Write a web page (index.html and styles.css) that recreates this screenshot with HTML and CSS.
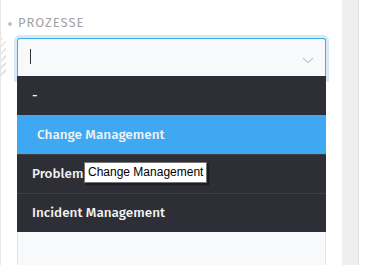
FILE: index.html
```html
<!DOCTYPE html>
<html lang="de">
<head>
    <meta charset="UTF-8">
    <meta name="viewport" content="width=device-width, initial-scale=1.0">
    <title>Prozesse</title>
    <link rel="stylesheet" href="styles.css">
</head>
<body>
    <div class="page">
        <div class="panel">
            <div class="hatch"></div>
            <div class="field">
                <div class="field-label">
                    <span class="dot"></span>
                    <span>Prozesse</span>
                </div>
                <div class="select-wrap">
                    <div class="select-input">
                        <span class="caret"></span>
                        <svg class="chevron" width="12" height="7" viewBox="0 0 12 7">
                            <path d="M1 1 L6 5.5 L11 1" fill="none" stroke="#cfcfcf" stroke-width="1.6"/>
                        </svg>
                    </div>
                    <ul class="options">
                        <li class="option">-</li>
                        <li class="option selected">Change Management</li>
                        <li class="option">Problem Management</li>
                        <li class="option">Incident Management</li>
                    </ul>
                    <div class="tooltip">Change Management</div>
                </div>
                <div class="rest"></div>
            </div>
        </div>
        <div class="sidebar"></div>
    </div>
</body>
</html>
```

FILE: styles.css
```css
* {
    margin: 0;
    padding: 0;
    box-sizing: border-box;
}

body {
    font-family: 'Fira Sans', 'Open Sans', sans-serif;
    background-color: #fff;
    width: 371px;
    height: 265px;
    overflow: hidden;
}

.page {
    display: flex;
    height: 265px;
}

.panel {
    position: relative;
    width: 342px;
    border-left: 1px solid #e6e6e6;
    padding-left: 16px;
    padding-right: 16px;
}

.hatch {
    position: absolute;
    left: 0;
    top: 38px;
    width: 5px;
    height: 38px;
    background: repeating-linear-gradient(135deg, #e4e4e4 0 2px, transparent 2px 5px);
}

.field {
    display: flex;
    flex-direction: column;
    height: 100%;
}

.field-label {
    display: flex;
    align-items: flex-start;
    gap: 6px;
    margin-left: -9px;
    padding-top: 16px;
    height: 35px;
    font-size: 13px;
    letter-spacing: 1px;
    text-transform: uppercase;
    color: #a3a3a3;
    line-height: 14px;
}

.dot {
    width: 4px;
    height: 4px;
    margin-top: 6px;
    border-radius: 50%;
    background-color: #b9c3ca;
}

.select-wrap {
    position: relative;
}

.select-input {
    position: relative;
    height: 41px;
    margin-top: 3px;
    background-color: #f8f9fb;
    border: 1px solid #3eaee8;
    border-bottom: none;
    border-radius: 3px 3px 0 0;
    box-shadow: 0 0 0 3px #d6e9f4;
}

.caret {
    position: absolute;
    left: 12px;
    top: 10px;
    width: 1px;
    height: 15px;
    background-color: #333;
}

.chevron {
    position: absolute;
    right: 11px;
    top: 18px;
}

.options {
    list-style: none;
    background-color: #2d2e36;
    position: relative;
    margin-top: -3px;
}

.option {
    height: 39px;
    line-height: 38px;
    padding-left: 15px;
    font-size: 13.5px;
    font-weight: 500;
    color: #f2f2f2;
    border-top: 1px solid #2d2e36;
}

.option + .option {
    border-top-color: #3e3f47;
}

.option.selected {
    background-color: #3ea8f2;
    border-top-color: #3ea8f2;
    padding-left: 20px;
}

.tooltip {
    position: absolute;
    left: 67px;
    top: 127px;
    height: 21px;
    padding: 0 3px;
    line-height: 19px;
    font-family: 'Liberation Sans', Arial, sans-serif;
    font-size: 12px;
    color: #000;
    background-color: #fff;
    border: 1px solid #767676;
    box-shadow: 2px 2px 1px rgba(0, 0, 0, 0.35);
}

.rest {
    flex: 1;
    background-color: #f8f9fb;
    border-left: 1px solid #e2e2e2;
    border-right: 1px solid #e2e2e2;
}

.sidebar {
    width: 17px;
    background-color: #efefef;
    border-right: 1px solid #e2e2e2;
}
```
